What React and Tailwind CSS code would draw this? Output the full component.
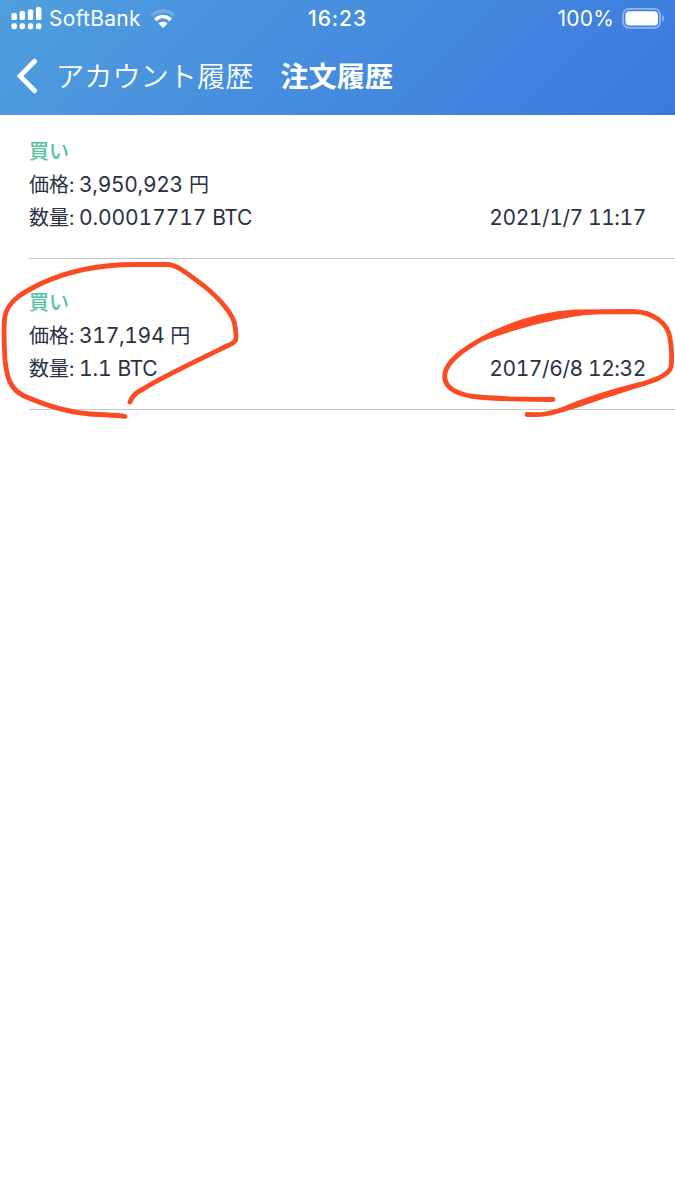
import React from 'react';

const orders = [
  { side: '買い', price: '3,950,923', amount: '0.00017717', date: '2021/1/7 11:17' },
  { side: '買い', price: '317,194', amount: '1.1', date: '2017/6/8 12:32' },
];

function Signal() {
  return (
    <svg className="h-[24px] w-[32px]" viewBox="0 0 32 24" fill="#fff">
      <rect x="0.5" y="6" width="5.4" height="7" rx="1.6" />
      <rect x="8.6" y="4" width="5.4" height="9" rx="1.6" />
      <rect x="16.8" y="2.4" width="5.4" height="10.6" rx="1.6" />
      <rect x="25" y="0" width="5.4" height="13" rx="1.6" />
      <rect x="0.5" y="16.2" width="5.4" height="6" rx="2" />
      <rect x="8.6" y="16.2" width="5.4" height="6" rx="2" />
      <rect x="16.8" y="16.2" width="5.4" height="6" rx="2" />
      <rect x="25" y="16.2" width="5.4" height="6" rx="2" />
    </svg>
  );
}

function Wifi() {
  return (
    <svg className="h-[20px] w-[26px]" viewBox="0 0 26 20" fill="none" strokeWidth="3.6">
      <path d="M1.6 6.6 C8 0.4 18 0.4 24.4 6.6" stroke="#fff" strokeOpacity="0.22" />
      <path d="M5.3 10.9 C9.6 6.4 16.4 6.4 20.7 10.9" stroke="#fff" />
      <path d="M8.4 14.4 C11 12.3 15 12.3 17.6 14.4 L13 19 Z" fill="#fff" />
    </svg>
  );
}

function Battery() {
  return (
    <svg className="h-[22px] w-[44px]" viewBox="0 0 44 22" fill="none">
      <rect x="2.1" y="0.9" width="37" height="19" rx="5.8" stroke="#fff" strokeOpacity="0.42" strokeWidth="1.8" />
      <rect x="4.4" y="3.2" width="32.6" height="14.4" rx="4" fill="#fff" />
      <path d="M41.2 7 C43.9 8.2 43.9 12.6 41.2 13.8 Z" fill="#fff" fillOpacity="0.42" />
    </svg>
  );
}

function Order({ order }) {
  return (
    <li className="ml-[29px] flex h-[151px] flex-col border-b border-[#c6c6c8] pt-[27px] pr-[30px] text-[21px] leading-[33px] font-[370] text-[#2b3144] tabular-nums">
      <div className="h-[33px] text-[20px] leading-[34px] font-medium text-[#56c4a0]">{order.side}</div>
      <div className="flex h-[34px] items-center">
        <span className="w-[50px] text-[20px] font-normal">価格:</span>
        <span className="pb-[2px] tracking-[-0.3px]">{order.price}</span>
        <span className="ml-[6px] text-[20px] font-normal">円</span>
      </div>
      <div className="flex h-[33px] items-center">
        <span className="w-[50px] text-[20px] font-normal">数量:</span>
        <span className="pb-[2px] tracking-[-0.1px]">{order.amount}</span>
        <span className="ml-[6px] pb-[2px] tracking-[-0.4px]">BTC</span>
        <span className="-mr-px ml-auto pb-[2px] tracking-[-0.42px]">{order.date}</span>
      </div>
    </li>
  );
}

export default function App() {
  return (
    <main className="relative h-[1200px] w-[675px] overflow-hidden bg-white font-['Inter','Noto_Sans_CJK_JP',sans-serif] whitespace-nowrap">
      <header className="h-[115px] bg-linear-135 from-[#509edd] to-[#3c79df] text-white">
        <div className="grid h-[37px] grid-cols-3 items-center text-[21px] leading-[37px]">
          <div className="flex items-center pl-[11px]">
            <Signal />
            <span className="ml-[6px] tracking-[0.3px]">SoftBank</span>
            <span className="ml-[9px]"><Wifi /></span>
          </div>
          <div className="text-center font-[550] tracking-[0.9px]">16:23</div>
          <div className="flex items-center justify-end pr-[10px]">
            <span className="mr-[7px] tracking-[0.2px]">100%</span>
            <Battery />
          </div>
        </div>
        <div className="flex h-[78px] items-center pl-[16px] text-[28.2px] leading-[40px]">
          <svg className="h-[36px] w-[22px]" viewBox="0 0 22 36" fill="none" stroke="#fff" strokeWidth="4.8" strokeLinecap="round" strokeLinejoin="miter">
            <path d="M18.6 3.2 L4 18 L18.6 32.8" />
          </svg>
          <span className="ml-[18px] pt-[2px] font-[350]">アカウント履歴</span>
          <h1 className="ml-[27px] pt-[2px] font-bold">注文履歴</h1>
        </div>
      </header>
      <ul className="-mt-[7px]">
        {orders.map((order) => <Order key={order.date} order={order} />)}
      </ul>
      <svg className="pointer-events-none absolute inset-0 h-full w-full" viewBox="0 0 675 1200" fill="none" stroke="#fc4a22" strokeWidth="4.8" strokeLinecap="round" strokeLinejoin="round">
        <path d="M125 416.5 C118 415 105 415 90 414 C65 412 40 403 24 396 C10 389 7 378 5 360 C4 342 4 322 5 316 C8 301 22 293 40 284 C72 269 104 264.5 135 264.5 L168 264.5 C178 265 189 275 204 286 C220 299 234 315 235 326 C237 340 237 342 229 345 C200 359 160 378 143 389 C137 392 132 396 130 402" />
        <path d="M553 399.5 C528 399 500 400 470 396 C450 392 443 384 445 373 C448 360 464 349 482 339 C510 324 540 314 575 312 L633 311.5 C654 312 668 324 670 338 C672 350 672 360 671 367 C668 379 640 384 620 391 C590 400 564 411 545 414 C540 415 534 414.5 527 414.5" />
        <path d="M482 339 C510 324 540 314 575 312 L598 312 C556 315 520 326 482 339 Z" fill="#fc4a22" strokeWidth="4" />
        <path d="M560 410 C580 404 600 397 620 391 L640 384 C612 391 586 399 560 410 Z" fill="#fc4a22" strokeWidth="4" />
      </svg>
    </main>
  );
}
